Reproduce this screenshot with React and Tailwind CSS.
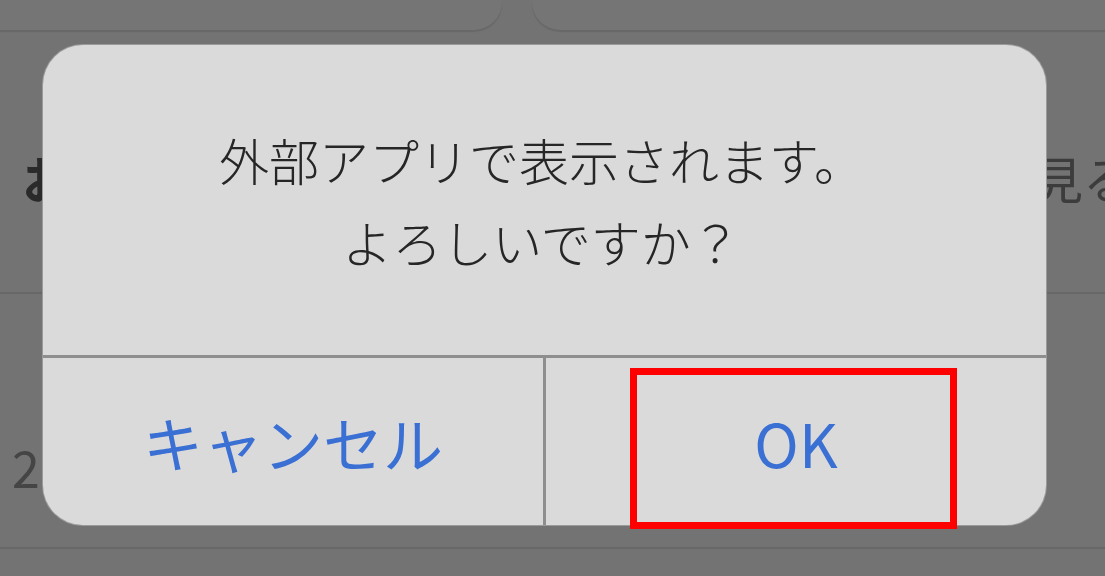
const jp = { fontFamily: '"Noto Sans CJK JP", "Noto Sans", sans-serif' }

export default function App() {
  return (
    <div className="relative h-[576px] w-[1105px] overflow-hidden bg-[#737373]" style={jp}>
      {/* dimmed page behind the alert */}
      <div className="flex h-[30px] gap-[30px]">
        <div className="w-[502px] rounded-br-[28px] bg-[#757575] shadow-[0_2px_1px_#686868]" />
        <div className="flex-1 rounded-bl-[28px] bg-[#757575] shadow-[0_2px_1px_#686868]" />
      </div>

      <div className="flex items-center pt-[110px] pb-[77px] text-[50px] leading-[75px]">
        <span className="pl-[22px] font-bold text-[#2a2a2a]">お知らせ</span>
        <span className="ml-auto mr-[-28px] whitespace-nowrap text-[#3c3c3c]">見る</span>
      </div>
      <div className="h-[2px] bg-[#686868]" />

      <div className="pt-[135px] pb-[43px] pl-[12px] text-[50px] leading-[75px] text-[#454545]">
        2024.06.01
      </div>
      <div className="h-[2px] bg-[#686868]" />

      {/* alert */}
      <div className="absolute left-[43px] top-[45px] flex h-[480px] w-[1003px] flex-col overflow-hidden rounded-[40px] bg-[#dadada] shadow-[0_0_0_1px_#9a9a9a]">
        <div className="flex h-[310px] flex-col items-center justify-center pr-[6px] text-[50px] font-light leading-[82px] text-[#262626]">
          <p>外部アプリで表示されます。</p>
          <p>よろしいですか？</p>
        </div>
        <div className="h-[3px] bg-[#8e8e8e]" />
        <div className="flex flex-1 text-[60px] text-[#3a6fd4]">
          <button className="flex w-[500px] items-center justify-center">キャンセル</button>
          <div className="w-[3px] bg-[#8e8e8e]" />
          <button className="flex flex-1 items-center justify-center">OK</button>
        </div>
      </div>

      {/* highlight annotation */}
      <div className="absolute left-[630px] top-[368px] h-[161px] w-[327px] border-[7px] border-[#ff0000]" />
    </div>
  )
}
